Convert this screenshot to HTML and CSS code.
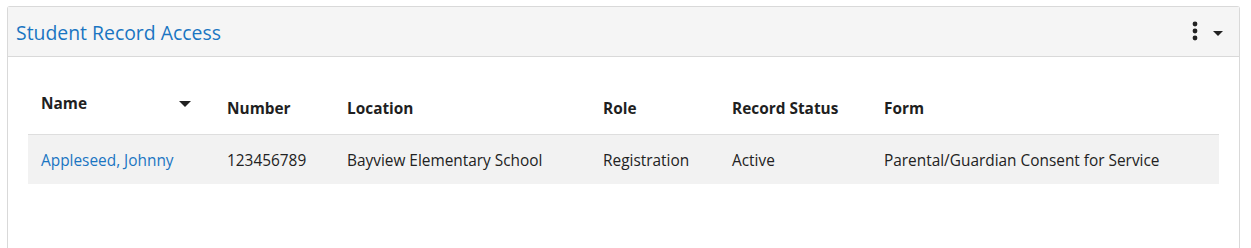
FILE: index.html
```html
<!DOCTYPE html>
<html lang="en">
<head>
<meta charset="UTF-8">
<meta name="viewport" content="width=device-width,initial-scale=1.0">
<title>Student Record Access</title>
<link rel="stylesheet" href="styles.css">
</head>
<body>
    <div class="panel">
        <!--面板标题-->
        <div class="panel-head">
            <h2 class="panel-title">Student Record Access</h2>
            <div class="panel-tools">
                <svg class="kebab" width="6" height="20" viewBox="0 0 6 20">
                    <circle cx="3" cy="3" r="2.4" fill="#222"/>
                    <circle cx="3" cy="10" r="2.4" fill="#222"/>
                    <circle cx="3" cy="17" r="2.4" fill="#222"/>
                </svg>
                <span class="caret"></span>
            </div>
        </div>
        <!--表格-->
        <div class="panel-body">
            <table class="records">
                <colgroup>
                    <col class="c-name">
                    <col class="c-number">
                    <col class="c-location">
                    <col class="c-role">
                    <col class="c-status">
                    <col>
                </colgroup>
                <thead>
                    <tr>
                        <th><div class="sort">Name<span class="caret"></span></div></th>
                        <th>Number</th>
                        <th>Location</th>
                        <th>Role</th>
                        <th>Record Status</th>
                        <th>Form</th>
                    </tr>
                </thead>
                <tbody>
                    <tr>
                        <td><a href="#">Appleseed, Johnny</a></td>
                        <td>123456789</td>
                        <td>Bayview Elementary School</td>
                        <td>Registration</td>
                        <td>Active</td>
                        <td>Parental/Guardian Consent for Service</td>
                    </tr>
                </tbody>
            </table>
        </div>
    </div>
</body>
</html>
```
FILE: styles.css
```css
/*初始化*/
*{
    margin:0;
    padding:0;
    box-sizing:border-box;
}
body{
    font-family:"Open Sans","Noto Sans",sans-serif;
    font-size:15.4px;
    color:#222;
    background:#fff;
}
/*面板*/
.panel{
    margin:6px 11px 0 7px;
    height:242px;
    border:1px solid #d9d9d9;
    border-bottom:none;
    border-radius:3px 3px 0 0;
}
.panel-head{
    height:50px;
    background:#f5f5f5;
    border-bottom:1px solid #d9d9d9;
    display:flex;
    align-items:center;
    justify-content:space-between;
    padding:1px 16px 0 8px;
}
.panel-title{
    font-size:19.4px;
    font-weight:400;
    color:#1a75c2;
}
.panel-tools{
    display:flex;
    align-items:center;
    gap:15px;
    padding-top:2px;
}
.kebab{
    display:block;
    margin-top:-4px;
}
.caret{
    display:inline-block;
    width:0;
    height:0;
    border-left:5px solid transparent;
    border-right:5px solid transparent;
    border-top:5px solid #222;
}
/*表格*/
.panel-body{
    padding:16px 20px 0 20px;
}
.records{
    width:100%;
    border-collapse:collapse;
    table-layout:fixed;
}
.c-name{ width:186px; }
.c-number{ width:120px; }
.c-location{ width:256px; }
.c-role{ width:129px; }
.c-status{ width:152px; }
.records th{
    text-align:left;
    font-weight:700;
    vertical-align:bottom;
    padding:20px 13px 14px 13px;
    line-height:22px;
    border-bottom:1px solid #dedede;
    color:#1f1f1f;
}
.sort{
    display:flex;
    align-items:center;
    justify-content:space-between;
    padding:0 10px 5px 0;
}
.sort .caret{
    border-top-color:#222;
    border-left-width:6px;
    border-right-width:6px;
    border-top-width:6px;
}
.records td{
    background:#f2f2f2;
    padding:15px 13px 12px 13px;
    line-height:22px;
    white-space:nowrap;
}
.records a{
    color:#1a75c2;
    text-decoration:none;
}
```
